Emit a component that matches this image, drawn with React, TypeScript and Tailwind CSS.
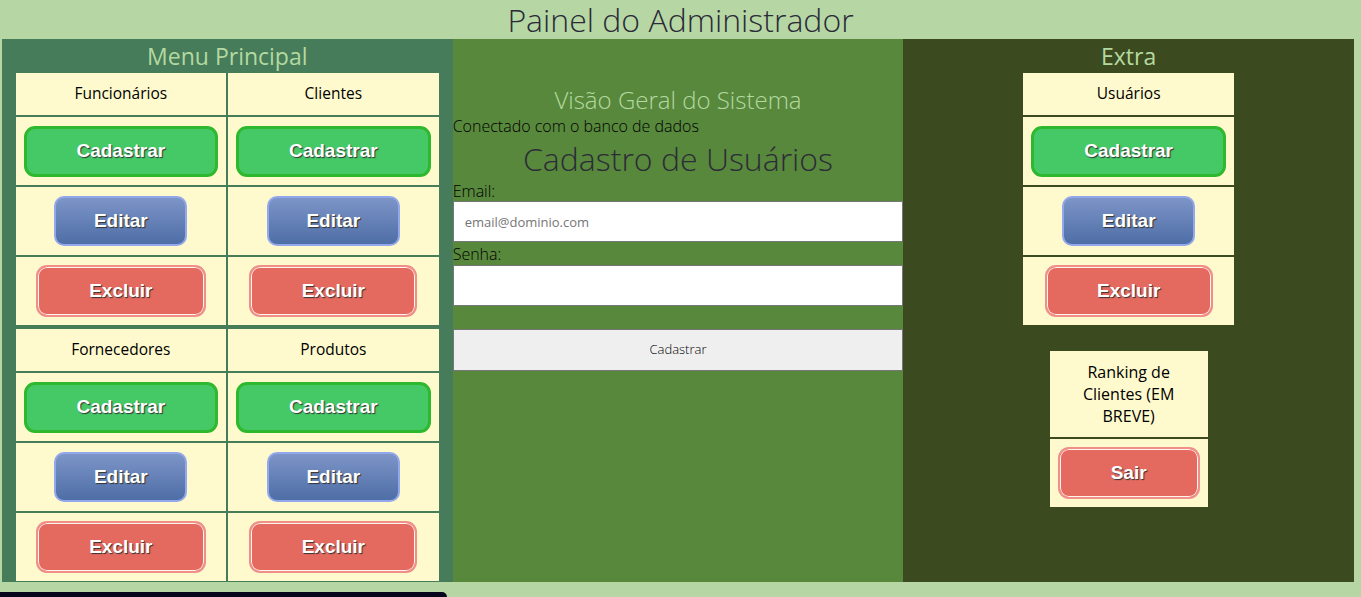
import React from "react";

const btnText =
  "font-['Liberation_Sans',Arial,sans-serif] font-bold text-[19px] text-white [text-shadow:1px_1px_1px_#333]";

function Cadastrar() {
  return (
    <button
      className={`h-[51px] w-full rounded-[11px] border-[3px] border-[#2db82d] bg-[#45c866] ${btnText}`}
    >
      Cadastrar
    </button>
  );
}

function Editar() {
  return (
    <button
      className={`h-[50px] w-[133px] rounded-[10px] border-2 border-[#93a8ec] bg-gradient-to-b from-[#7d95c8] to-[#4e6ea6] ${btnText}`}
    >
      Editar
    </button>
  );
}

function Excluir({ label = "Excluir", w = "w-[170px]" }: { label?: string; w?: string }) {
  return (
    <button
      className={`h-[52px] ${w} rounded-[11px] border-2 border-[#f08e88] bg-[#e46a60] shadow-[inset_0_0_0_1px_#fff4f0] ${btnText}`}
    >
      {label}
    </button>
  );
}

const cell = "flex items-center justify-center bg-[#fffacd]";
const head = "text-[15.5px] text-black";

function Block({ a, b }: { a: string; b: string }) {
  return (
    <div className="grid w-[423px] grid-cols-[210px_211px] grid-rows-[42px_68px_68px_68px] gap-[2px]">
      <div className={`${cell} ${head}`}>{a}</div>
      <div className={`${cell} ${head}`}>{b}</div>
      <div className={`${cell} px-[8px]`}>
        <Cadastrar />
      </div>
      <div className={`${cell} px-[8px]`}>
        <Cadastrar />
      </div>
      <div className={cell}>
        <Editar />
      </div>
      <div className={cell}>
        <Editar />
      </div>
      <div className={cell}>
        <Excluir />
      </div>
      <div className={cell}>
        <Excluir w="w-[168px]" />
      </div>
    </div>
  );
}

export default function App() {
  return (
    <div className="min-h-[597px] overflow-hidden bg-[#b6d7a4] font-['Open_Sans',sans-serif]">
      <h1 className="h-[39px] text-center text-[32px] font-light leading-[39px] text-[#2a2a38]">
        Painel do Administrador
      </h1>
      <div className="ml-[2px] grid h-[543px] w-[1352px] grid-cols-3">
        {/* Left */}
        <div className="flex flex-col items-center bg-[#467c5a]">
          <h2 className="h-[34px] text-[23px] leading-[34px] text-[#b4d9a0]">Menu Principal</h2>
          <div className="flex flex-col gap-[4px]">
            <Block a="Funcionários" b="Clientes" />
            <Block a="Fornecedores" b="Produtos" />
          </div>
        </div>

        {/* Center */}
        <div className="flex flex-col bg-[#58883c] pt-[46px] font-light">
          <h2 className="text-center text-[24px] leading-[30px] text-[#b4d9a0]">
            Visão Geral do Sistema
          </h2>
          <p className="text-[16px] leading-[22px] text-black">Conectado com o banco de dados</p>
          <h2 className="text-center text-[32px] leading-[44px] text-[#2c2c38]">
            Cadastro de Usuários
          </h2>
          <label className="text-[16px] leading-[20px] text-black">Email:</label>
          <input
            className="h-[41px] w-full border border-[#767676] bg-white px-[11px] text-[13px] font-normal text-black outline-none placeholder:text-[#757575]"
            placeholder="email@dominio.com"
          />
          <label className="pt-[1px] text-[16px] leading-[22px] text-black">Senha:</label>
          <input
            type="password"
            className="h-[41px] w-full border border-[#767676] bg-white px-[11px] text-[13px] outline-none"
          />
          <button className="mt-[23px] h-[42px] w-full border border-[#767676] bg-[#efefef] text-[13px] font-light text-black">
            Cadastrar
          </button>
        </div>

        {/* Right */}
        <div className="flex flex-col items-center bg-[#3c4b1f]">
          <h2 className="h-[34px] text-[23px] leading-[34px] text-[#b4d9a0]">Extra</h2>
          <div className="grid w-[211px] grid-rows-[42px_68px_68px_68px] gap-[2px]">
            <div className={`${cell} ${head}`}>Usuários</div>
            <div className={`${cell} px-[8px]`}>
              <Cadastrar />
            </div>
            <div className={cell}>
              <Editar />
            </div>
            <div className={cell}>
              <Excluir w="w-[168px]" />
            </div>
          </div>
          <div className="mt-[26px] grid w-[158px] grid-rows-[86px_68px] gap-[2px]">
            <div className={`${cell} px-[12px] text-center text-[16px] leading-[22px] text-black`}>
              Ranking de Clientes (EM BREVE)
            </div>
            <div className={`${cell} px-[8px]`}>
              <Excluir label="Sair" w="w-full" />
            </div>
          </div>
        </div>
      </div>
      <div className="mt-[10px] h-[5px] w-[447px] rounded-tr-[5px] bg-[#05051c]" />
    </div>
  );
}
